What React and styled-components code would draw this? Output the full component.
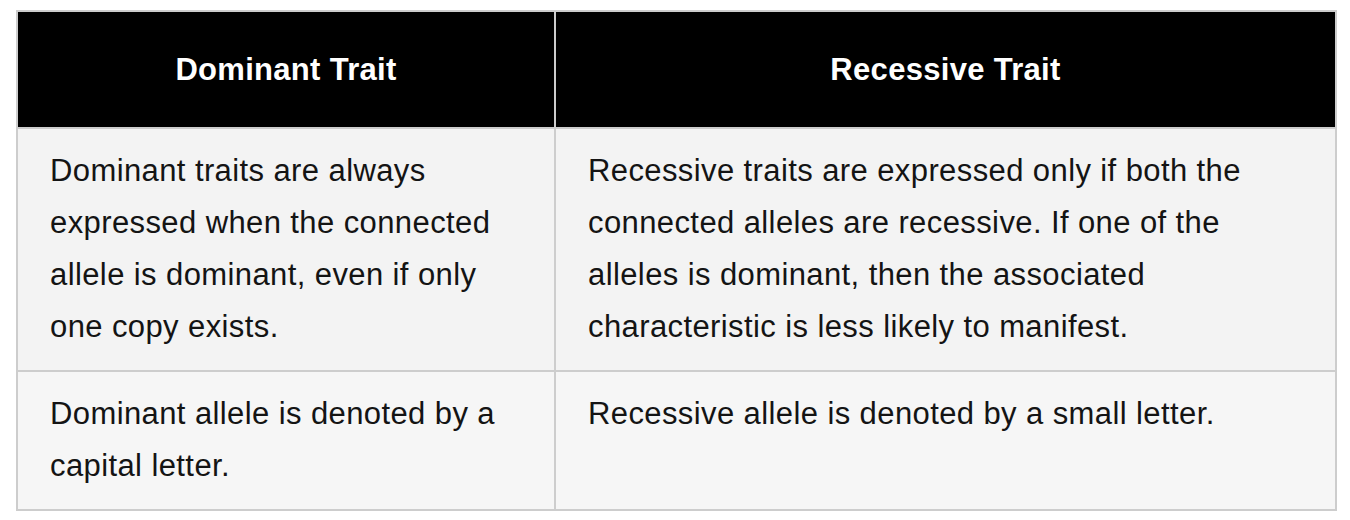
import React from "react";
import styled, { createGlobalStyle } from "styled-components";

const GlobalStyle = createGlobalStyle`
	body {
		margin: 0;
		background: #ffffff;
		font-family: "Liberation Sans", Arial, sans-serif;
	}
`;

const Page = styled.div`
	padding: 10px 13px 0 16px;
`;

const Table = styled.table`
	width: 1321px;
	border-collapse: collapse;
	table-layout: fixed;
	border: 2px solid #cdcdcd;
	font-size: 31px;
	line-height: 52px;
`;

const HeadCell = styled.th`
	background: #000000;
	color: #ffffff;
	font-weight: 700;
	letter-spacing: 0.3px;
	text-align: center;
	padding: 32px 32px 31px;
	border: 2px solid #cdcdcd;
`;

const Row = styled.tr`
	background: ${props => (props.light ? "#f6f6f6" : "#f3f3f3")};
`;

const Cell = styled.td`
	color: #141414;
	letter-spacing: 0.4px;
	vertical-align: top;
	padding: 16px ${props => props.padRight}px 17px 32px;
	border: 2px solid #cdcdcd;
`;

const rows = [
	[
		"Dominant traits are always expressed when the connected allele is dominant, even if only one copy exists.",
		"Recessive traits are expressed only if both the connected alleles are recessive. If one of the alleles is dominant, then the associated characteristic is less likely to manifest.",
	],
	[
		"Dominant allele is denoted by a capital letter.",
		"Recessive allele is denoted by a small letter.",
	],
];

export default function App() {
	return (
		<>
			<GlobalStyle />
			<Page>
				<Table>
					<colgroup>
						<col style={{ width: "538px" }} />
						<col />
					</colgroup>
					<thead>
						<tr>
							<HeadCell>Dominant Trait</HeadCell>
							<HeadCell>Recessive Trait</HeadCell>
						</tr>
					</thead>
					<tbody>
						{rows.map((row, i) => (
							<Row key={i} light={i === 1}>
								<Cell padRight={40}>{row[0]}</Cell>
								<Cell padRight={50}>{row[1]}</Cell>
							</Row>
						))}
					</tbody>
				</Table>
			</Page>
		</>
	);
}
